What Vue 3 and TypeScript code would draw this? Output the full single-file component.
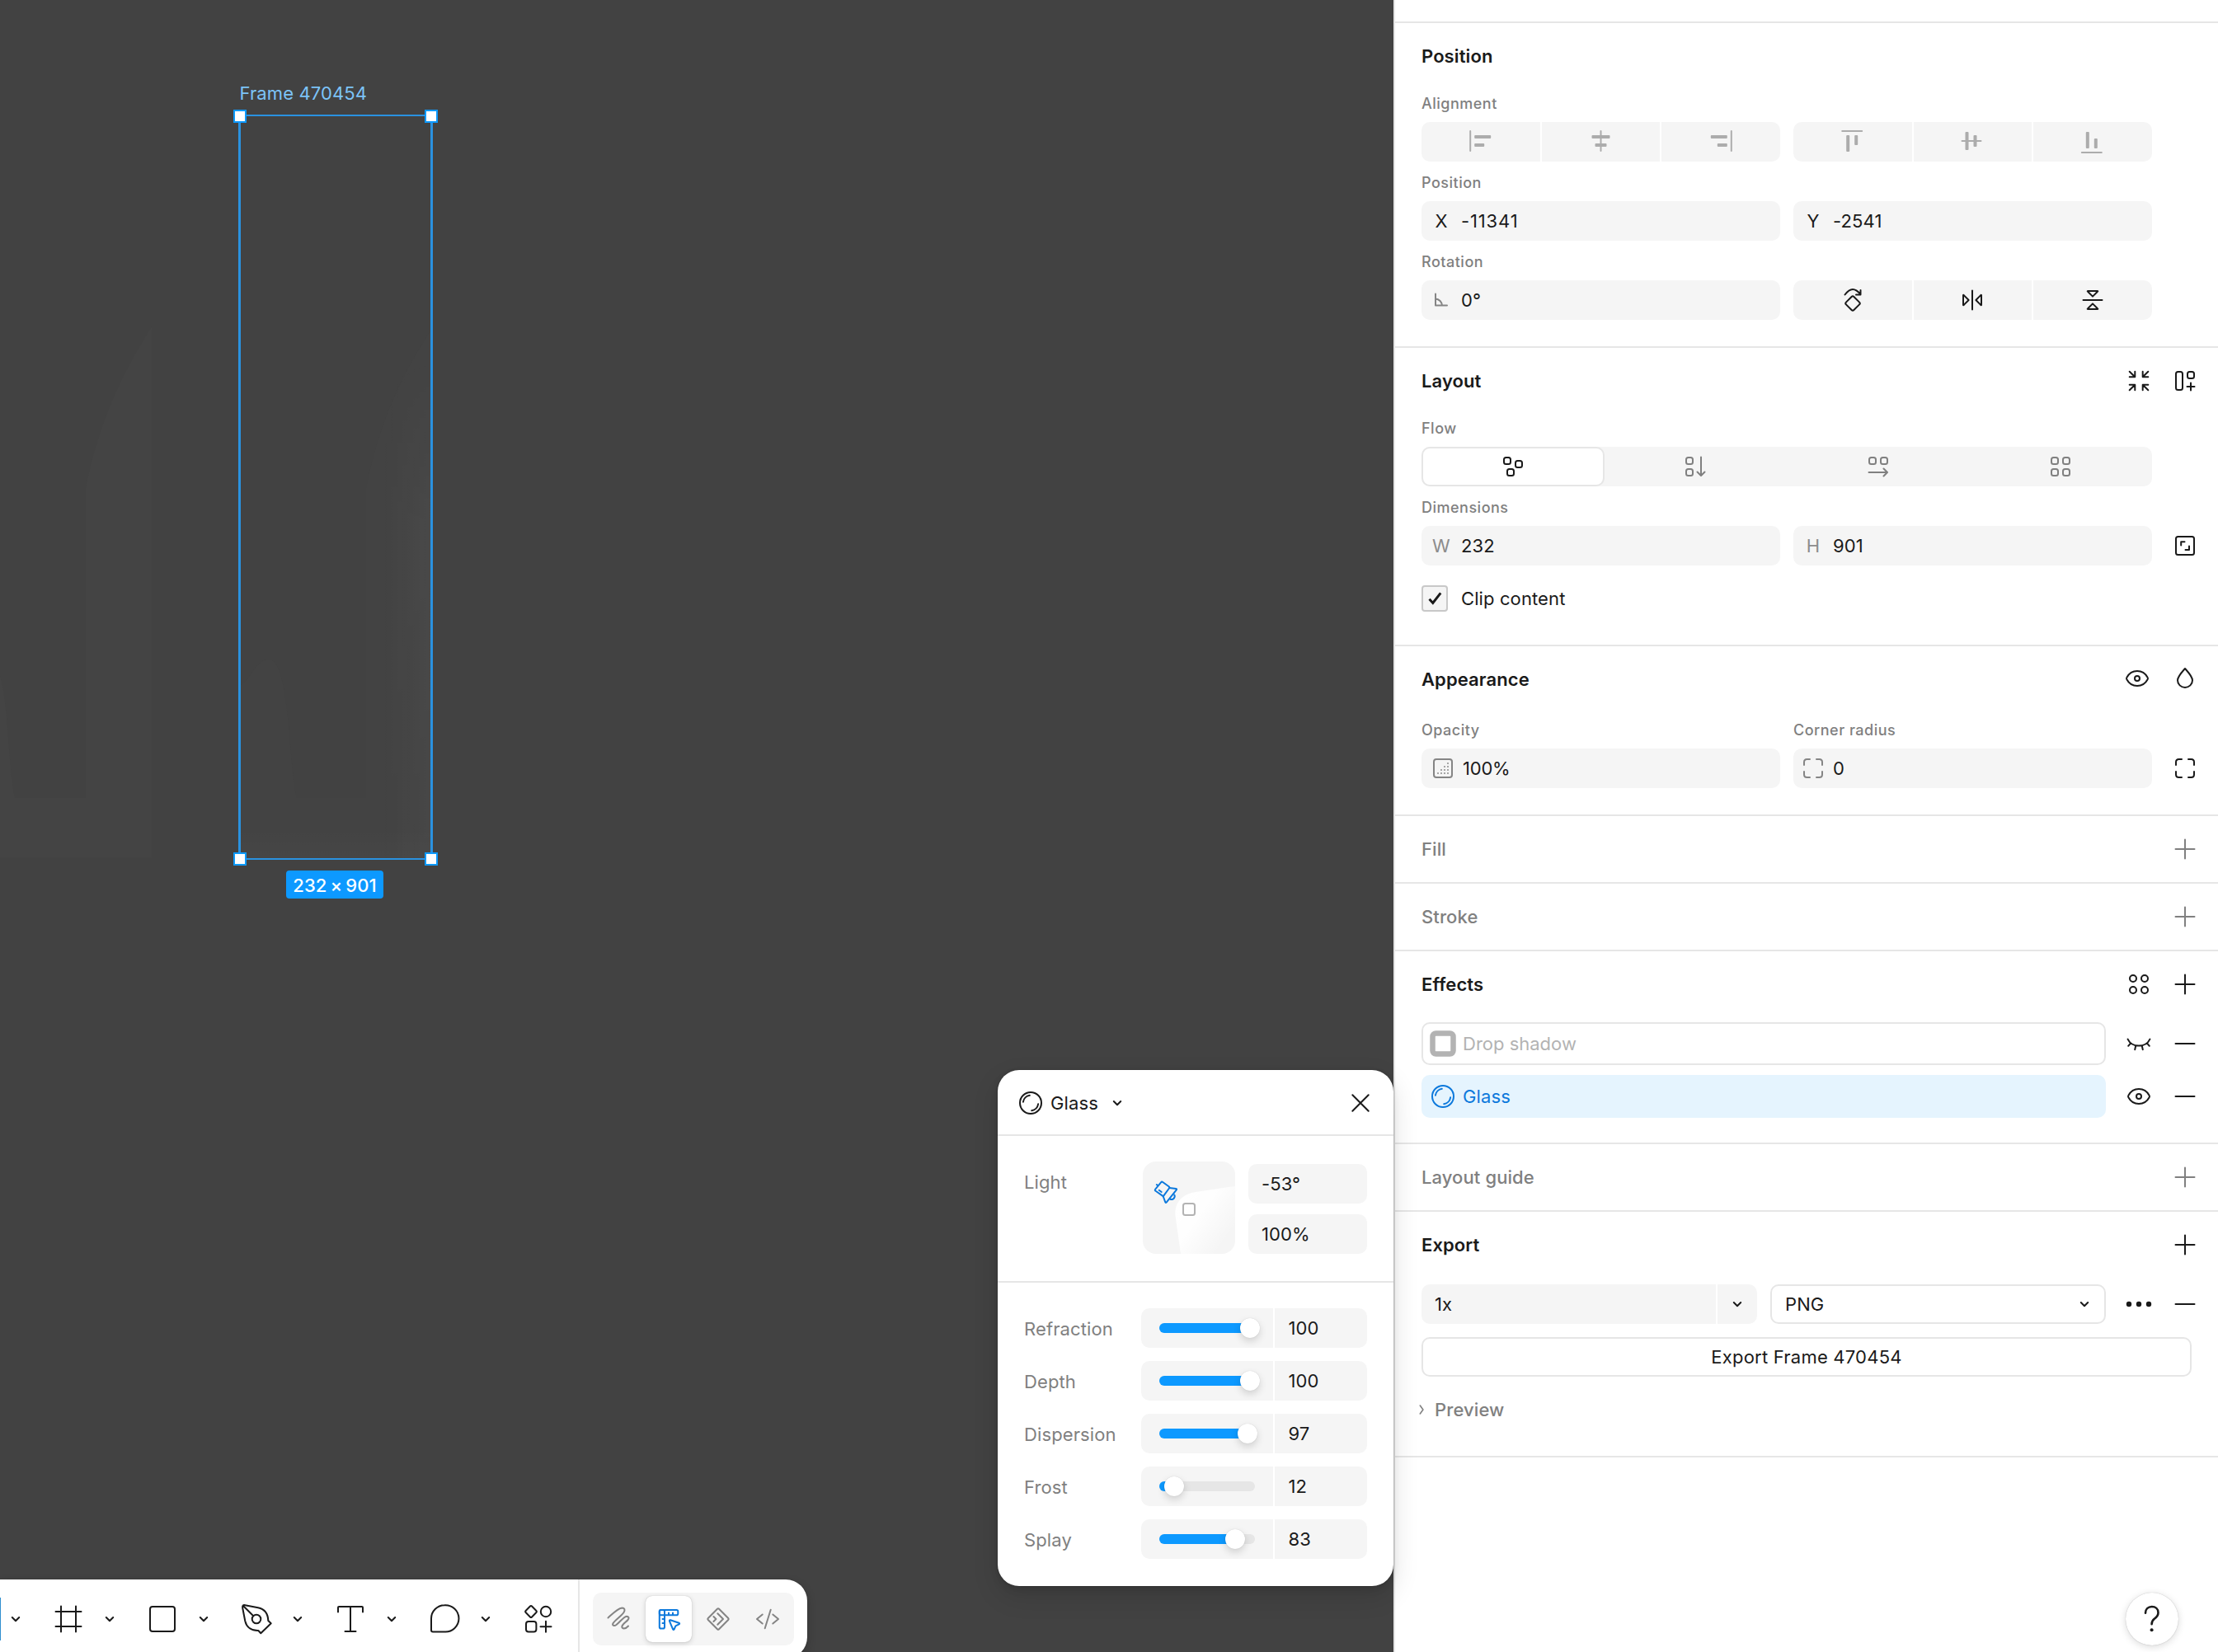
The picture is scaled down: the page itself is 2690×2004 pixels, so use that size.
<script setup lang="ts">
import { h, type FunctionalComponent } from 'vue'

const square = (x: number, y: number) => `<rect x="${x}" y="${y}" width="8" height="8" rx="2.5"/>`
const bar = (x: number, y: number, w: number, ht: number) =>
  `<rect x="${x}" y="${y}" width="${w}" height="${ht}" rx="1" fill="currentColor" stroke="none"/>`
const dot = (x: number, y: number) => `<rect x="${x - 1}" y="${y - 1}" width="2" height="2" fill="currentColor" stroke="none"/>`

// Every glyph is drawn on a 48 x 48 grid with a 2px stroke.
const glyphs: Record<string, string> = {
  plus: '<path d="M24 12.5v23M12.5 24h23"/>',
  minus: '<path d="M12.5 24h23"/>',
  close: '<path d="M14.3 14.3l19.4 19.4M33.7 14.3L14.3 33.7"/>',
  chevron: '<path d="M19.8 22l4.2 4.2 4.2-4.2"/>',
  chevronRight: '<path d="M22.3 19l3.6 5-3.6 5" stroke-width="1.6"/>',
  more: '<g fill="currentColor" stroke="none"><circle cx="12" cy="24" r="3.2"/><circle cx="24" cy="24" r="3.2"/><circle cx="36" cy="24" r="3.2"/></g>',
  eye: '<path d="M11.4 25.2q-.8-1.2 0-2.4C14 18 18.5 15 24 15s10 3 12.6 7.8q.8 1.2 0 2.4C34 30 29.5 33 24 33s-10-3-12.6-7.8z"/><circle cx="24" cy="24" r="3"/>',
  eyeClosed: '<path d="M10.6 18.6C13 23.600 18 26.600 24 26.600s11-3 13.400-8M14.200 23.400l-3 3.400M20.300 26.400l-1.100 4.800M27.700 26.400l1.100 4.800M33.800 23.400l3 3.400"/>',
  drop: '<path d="M24 11c4 4.500 9 9.600 9 14.300a9 8.600 0 0 1-18 0C15 20.600 20 15.500 24 11z"/>',
  shrink: '<path d="M12.700 12.700l6.600 6.600M19.300 12.700v6.600h-6.600M35.300 12.700l-6.600 6.600M28.700 12.700v6.600h6.600M12.700 35.300l6.600-6.600M19.300 35.300v-6.600h-6.600M35.300 35.300l-6.600-6.600M28.700 35.300v-6.600h6.600"/>',
  autoLayout: '<rect x="13" y="13" width="8" height="22" rx="2.500"/><rect x="27" y="13" width="8" height="8" rx="2.500"/><path d="M31 26.500v9M26.500 31h9"/>',
  aspect: '<rect x="13" y="13" width="22" height="22" rx="2.500"/><path d="M19.200 23.500v-4.300h4.300M24.500 29h4.500v-4.500"/>',
  flowFree: square(13, 13) + square(27, 17) + square(17, 27),
  flowDown: square(13, 13) + square(13, 27) + '<path d="M31 12.500v22M26.500 30.500l4.500 4.500 4.500-4.500"/>',
  flowRight: square(13, 13) + square(27, 13) + '<path d="M12.500 31h22M30.500 26.500L35 31l-4.500 4.500"/>',
  flowGrid: square(13, 13) + square(27, 13) + square(13, 27) + square(27, 27),
  alignLeft: bar(10.2, 10, 2, 26) + bar(16.2, 16, 20, 4) + bar(16.2, 26, 12, 4),
  alignCenter: bar(23.5, 10, 2, 26) + bar(13.5, 16, 22, 4) + bar(17.5, 26, 14, 4),
  alignRight: bar(35.8, 10, 2, 26) + bar(11.8, 16, 20, 4) + bar(19.8, 26, 12, 4),
  alignTop: bar(10.2, 10, 26, 2) + bar(16.2, 16, 4, 20) + bar(26.2, 16, 4, 12),
  alignMiddle: bar(10.5, 22, 25, 2) + bar(15.5, 12, 4, 22) + bar(25.5, 16, 4, 14),
  alignBottom: bar(9.8, 36, 26, 2) + bar(15.8, 12, 4, 20) + bar(25.8, 20, 4, 12),
  rotate: '<rect x="17.300" y="21.300" width="13.400" height="13.400" rx="2" transform="rotate(45 24 28)"/><path d="M14.500 17.500C17.500 13.500 20.500 11 24 11s6.500 2.500 9.500 6M33.500 12v5.400H28"/>',
  flipH: '<path d="M24 12.500v23"/><path d="M13 18.300v11.400q0 1.300 1-.1l5.600-5.600-5.600-5.600q-1-1.400-1-.1zM35 18.300v11.400q0 1.300-1-.1L28.400 24l5.600-5.600q1-1.400 1-.1z"/>',
  flipV: '<path d="M12.500 24h23"/><path d="M18.300 13h11.400q1.300 0-.1 1L24 19.600 18.400 14q-1.400-1-.1-1zM18.300 35h11.400q1.300 0-.1-1L24 28.400 18.400 34q-1.400 1-.1 1z"/>',
  angle: '<path d="M17 16.500V30.500h14M17 22.500a8.500 8.500 0 0 1 8 8"/>',
  opacity: '<rect x="13" y="13" width="22" height="22" rx="3"/><g opacity=".7">' +
    [[30, 18], [26, 22], [30, 22], [22, 26], [26, 26], [30, 26], [18, 30], [22, 30], [26, 30], [30, 30]].map(([x, y]) => dot(x, y)).join('') + '</g>',
  corners: '<path d="M13 20v-3.500q0-3.500 3.500-3.500H20M28 13h3.500q3.500 0 3.500 3.500V20M35 28v3.500q0 3.500-3.500 3.500H28M20 35h-3.500q-3.500 0-3.500-3.500V28"/>',
  styles: '<circle cx="17" cy="17" r="4"/><circle cx="31" cy="17" r="4"/><circle cx="17" cy="31" r="4"/><circle cx="31" cy="31" r="4"/>',
  shadow: '<rect x="11.500" y="11.500" width="25" height="25" rx="4" stroke-width="6.500"/>',
  glass: '<circle cx="24" cy="24" r="13"/><path d="M14.900 22.700a9.300 9.300 0 0 1 7.900-7.900M33.100 25.300a9.300 9.300 0 0 1-7.900 7.900"/>',
  frame: '<path d="M15 8.500v31M33 8.500v31M8.500 15h31M8.500 33h31"/>',
  rect: '<rect x="9" y="9" width="30" height="30" rx="3"/>',
  pen: '<path d="M10.300 7.200L26 10.200C34 11.800 38 17 38.300 26l3.400 3.200L29.300 41.200 26.300 38C18 38.300 12 34 10.300 26.500L7.200 10.500Q6.500 6.500 10.300 7.200z"/><circle cx="24" cy="24" r="5.300"/><path d="M8.500 8.500L20 20"/>',
  text: '<path d="M9 15.500V10q0-1 1-1h28q1 0 1 1v5.500M24 9v30M17.500 39h13"/>',
  comment: '<path d="M24 7.200a16.200 16.200 0 1 1 0 32.300H10a2 2 0 0 1-2-2V23.300A16.200 16.200 0 0 1 24 7.200z"/>',
  components: '<rect x="9.700" y="9.700" width="10.600" height="10.600" rx="1.500" transform="rotate(45 15 15)"/><circle cx="33" cy="15" r="6.200"/><rect x="9" y="27" width="12.400" height="12.400" rx="3"/><path d="M33 26.700v13M26.500 33.200h13"/>',
  draw: '<path d="M10.500 22.500C16 17.500 22 11.200 27.500 10.500c3 0 4 2.500 2 5.500-3 4.500-11.500 10-13.200 13.500-.8 2.500 1.700 3.500 4.200 1.500 4.500-3.500 8.500-9.500 12.500-10.300 2.500 0 3.300 2.300 1.500 4.300-2.500 3-6.500 5-7.200 8-.3 3 4.200 3.500 7.700-.5"/>',
  design: '<rect x="12.800" y="13" width="22.500" height="6.200" rx="1.800"/><rect x="12.800" y="13" width="6.200" height="22.500" rx="1.800"/><path d="M24 16.500v2M29 16.500v2M16.500 24h2M16.500 29h2M25 26.600q-.5-1.700 1.100-1.300l10.300 3.400q1.500.8.100 1.600l-4.100 2-1.800 4.200q-.8 1.300-1.500-.1z"/>',
  inspect: '<rect x="14.600" y="14.600" width="18.800" height="18.800" rx="1.500" transform="rotate(45 24 24)"/><path d="M18.400 21l3 3-3 3M23.300 17.300L30 24l-6.700 6.700"/>',
  code: '<path d="M17.700 18.500L11 24l6.700 5.500M27.700 12.700l-7 22.600M30.300 18.500L37 24l-6.700 5.500"/>',
  help: '<path d="M16 16.800c0-4.600 3.200-7.800 7.700-7.800s7.800 2.900 7.800 7.200c0 3.700-2 5.500-4.400 7.300-2.300 1.700-3.500 3.100-3.500 6.700" stroke-width="2.600"/><circle cx="23.600" cy="37.300" r="2" fill="currentColor" stroke="none"/>',
}

const Icon: FunctionalComponent<{ name: string }> = (props) =>
  h('svg', {
    width: 48,
    height: 48,
    viewBox: '0 0 48 48',
    fill: 'none',
    stroke: 'currentColor',
    'stroke-width': 2,
    'stroke-linecap': 'round',
    'stroke-linejoin': 'round',
    style: 'flex:none;display:block',
    innerHTML: glyphs[props.name],
  })
Icon.props = ['name']

const tools = ['frame', 'rect', 'pen', 'text', 'comment']
const modes = ['draw', 'design', 'inspect', 'code']
const flows = ['flowFree', 'flowDown', 'flowRight', 'flowGrid']

const sliders = [
  { label: 'Refraction', value: 100, knob: 110 },
  { label: 'Depth', value: 100, knob: 110 },
  { label: 'Dispersion', value: 97, knob: 107 },
  { label: 'Frost', value: 12, knob: 18 },
  { label: 'Splay', value: 83, knob: 92 },
]
</script>

<template>
  <div class="app">
    <main class="canvas">
      <svg class="artwork" width="600" height="1100" viewBox="0 0 600 1100">
        <defs>
          <linearGradient id="edge" x1="0" x2="1" y1="0" y2="0">
            <stop offset="0" stop-color="#fff" stop-opacity="0" />
            <stop offset="1" stop-color="#fff" stop-opacity=".035" />
          </linearGradient>
          <linearGradient id="floor" x1="0" x2="0" y1="0" y2="1">
            <stop offset="0" stop-color="#fff" stop-opacity="0" />
            <stop offset="1" stop-color="#fff" stop-opacity=".018" />
          </linearGradient>
          <linearGradient id="fade" x1="0" x2="0" y1="0" y2="1">
            <stop offset="0" stop-color="#000" />
            <stop offset=".35" stop-color="#fff" />
            <stop offset=".6" stop-color="#ddd" />
            <stop offset="1" stop-color="#aaa" />
          </linearGradient>
          <mask id="fadeTop"><rect x="440" y="430" width="90" height="612" fill="url(#fade)" /></mask>
        </defs>
        <path d="M184 396C150 450 120 510 104 592V968H18C10 930 10 850 0 820V1040H184z" fill="#444" />
        <path d="M523 400C490 450 460 510 444 592V968H360C350 930 352 800 326 800C310 800 304 825 291 832V1042H523z" fill="#434343" />
        <rect x="464" y="430" width="60" height="612" fill="url(#edge)" mask="url(#fadeTop)" />
        <rect x="291" y="1004" width="232" height="38" fill="url(#floor)" />
      </svg>
      <div class="frame-label">Frame 470454</div>
      <div class="selection">
        <i class="handle tl" /><i class="handle tr" /><i class="handle bl" /><i class="handle br" />
      </div>
      <div class="size-badge">232 × 901</div>

      <nav class="toolbar">
        <span class="move-tool" />
        <span class="caret"><Icon name="chevron" /></span>
        <template v-for="t in tools" :key="t">
          <span class="tool"><Icon :name="t" /></span>
          <span class="caret"><Icon name="chevron" /></span>
        </template>
        <span class="tool"><Icon name="components" /></span>
        <span class="rule" />
        <div class="modes">
          <span v-for="m in modes" :key="m" :class="['mode', { on: m === 'design' }]"><Icon :name="m" /></span>
        </div>
      </nav>

      <section class="popover">
        <header class="pop-head">
          <Icon name="glass" />
          <span class="pop-title">Glass</span>
          <Icon name="chevron" class="pop-caret" />
          <Icon name="close" class="pop-close" />
        </header>
        <div class="light">
          <span class="name">Light</span>
          <svg class="dial" width="112" height="112" viewBox="0 0 112 112" fill="none" stroke-linejoin="round" stroke-linecap="round">
            <defs>
              <linearGradient id="beam" gradientUnits="userSpaceOnUse" x1="45" y1="48" x2="104" y2="90">
                <stop offset="0" stop-color="#fff" />
                <stop offset=".4" stop-color="#fff" stop-opacity=".9" />
                <stop offset="1" stop-color="#fff" stop-opacity="0" />
              </linearGradient>
            </defs>
            <path d="M46 112L39.500 66C38 48 50 39 64 37L104 31L112 30V112z" fill="url(#beam)" />
            <rect x="49" y="51" width="14" height="14" rx="2.500" stroke="#b3b3b3" stroke-width="2" />
            <g stroke="#0d79dc" stroke-width="2">
              <path d="M22 25.300q1-1.200 2.200-.3l7.300 5.300q1.300 1 .4 2.200l-6.300 8.700q-1 1-2 .2l-8-5.600q-1.400-1-.4-2.200z" />
              <path d="M32.300 32l8 .9q1.300.3.500 1.400L28.600 49.600q-.8.800-1.300-.2L24.800 42.500" />
              <path d="M38.300 40.500c1.500 3-1.500 6.500-5 5.200M19.700 34.800l3 2.200M16.800 28l1.200.9" />
            </g>
          </svg>
          <div class="light-values">
            <span class="input">-53°</span>
            <span class="input">100%</span>
          </div>
        </div>
        <div class="sliders">
          <div v-for="s in sliders" :key="s.label" class="slider-row">
            <span class="name">{{ s.label }}</span>
            <span class="slider">
              <span class="track">
                <span class="filled" :style="{ width: s.knob + 'px' }" />
                <span class="knob" :style="{ left: s.knob - 12 + 'px' }" />
              </span>
            </span>
            <span class="slider-value">{{ s.value }}</span>
          </div>
        </div>
      </section>
    </main>

    <aside class="panel">
      <div class="above" />
      <section>
        <header class="title">Position</header>
        <div class="label">Alignment</div>
        <div class="pair">
          <div class="segments faint">
            <span><Icon name="alignLeft" /></span><span><Icon name="alignCenter" /></span><span><Icon name="alignRight" /></span>
          </div>
          <div class="segments faint">
            <span><Icon name="alignTop" /></span><span><Icon name="alignMiddle" /></span><span><Icon name="alignBottom" /></span>
          </div>
        </div>
        <div class="label">Position</div>
        <div class="pair">
          <div class="field"><b class="dark">X</b><span class="loose">-11341</span></div>
          <div class="field"><b class="dark">Y</b>-2541</div>
        </div>
        <div class="label">Rotation</div>
        <div class="pair">
          <div class="field"><Icon name="angle" class="grey" />0°</div>
          <div class="segments">
            <span><Icon name="rotate" /></span><span><Icon name="flipH" /></span><span><Icon name="flipV" /></span>
          </div>
        </div>
      </section>

      <section>
        <header class="title">Layout<span class="actions"><Icon name="shrink" /><Icon name="autoLayout" /></span></header>
        <div class="label">Flow</div>
        <div class="flow">
          <span v-for="(f, i) in flows" :key="f" :class="{ on: i === 0 }"><Icon :name="f" /></span>
        </div>
        <div class="label">Dimensions</div>
        <div class="line">
          <div class="pair">
            <div class="field"><b>W</b>232</div>
            <div class="field"><b>H</b>901</div>
          </div>
          <Icon name="aspect" />
        </div>
        <div class="clip">
          <svg class="check" width="32" height="32" viewBox="0 0 32 32" fill="none">
            <rect x="1" y="1" width="30" height="30" rx="3" fill="#f5f5f5" stroke="#c8c8c8" stroke-width="2" />
            <path d="M9.500 16.800l4.300 4.600 9.400-12" stroke="#1a1a1a" stroke-width="3" />
          </svg>
          Clip content
        </div>
      </section>

      <section>
        <header class="title tall">Appearance<span class="actions"><Icon name="eye" class="nudge" /><Icon name="drop" /></span></header>
        <div class="pair">
          <div class="label">Opacity</div>
          <div class="label">Corner radius</div>
        </div>
        <div class="line">
          <div class="pair">
            <div class="field wide"><Icon name="opacity" class="grey" /><span class="tight">100%</span></div>
            <div class="field"><Icon name="corners" class="grey" />0</div>
          </div>
          <Icon name="corners" />
        </div>
      </section>

      <section class="empty">
        <header class="title">Fill<span class="actions"><Icon name="plus" /></span></header>
      </section>
      <section class="empty">
        <header class="title">Stroke<span class="actions"><Icon name="plus" /></span></header>
      </section>

      <section class="effects">
        <header class="title">Effects<span class="actions"><Icon name="styles" /><Icon name="plus" /></span></header>
        <div class="line effect">
          <div class="chip off"><Icon name="shadow" />Drop shadow</div>
          <Icon name="eyeClosed" /><Icon name="minus" />
        </div>
        <div class="line effect">
          <div class="chip on"><Icon name="glass" />Glass</div>
          <Icon name="eye" /><Icon name="minus" />
        </div>
      </section>

      <section class="empty">
        <header class="title">Layout guide<span class="actions"><Icon name="plus" /></span></header>
      </section>

      <section class="export">
        <header class="title">Export<span class="actions"><Icon name="plus" /></span></header>
        <div class="line export-line">
          <div class="scale"><span class="scale-value">1x</span><span class="scale-caret"><Icon name="chevron" /></span></div>
          <div class="select"><span>PNG</span><Icon name="chevron" /></div>
          <Icon name="more" class="more" /><Icon name="minus" />
        </div>
        <div class="export-button">Export Frame 470454</div>
        <div class="preview"><Icon name="chevronRight" />Preview</div>
      </section>

      <div class="help"><Icon name="help" /></div>
    </aside>
  </div>
</template>

<style>
html,
body {
  margin: 0;
  overflow: hidden;
}
</style>

<style scoped>
.app {
  width: 2690px;
  height: 2004px;
  display: flex;
  overflow: hidden;
  box-sizing: border-box;
  font: 400 22px/32px Inter, 'Liberation Sans', sans-serif;
  letter-spacing: 0.11px;
  color: #1a1a1a;
}
.app * {
  box-sizing: border-box;
}
.canvas {
  position: relative;
  width: 1690px;
  background: #424242;
  z-index: 1;
}

/* selection on the canvas */
.artwork {
  position: absolute;
  left: 0;
  top: 0;
}
.frame-label {
  position: absolute;
  left: 290.5px;
  top: 97px;
  color: #7cc4f8;
}
.selection {
  position: absolute;
  left: 289px;
  top: 139px;
  width: 236px;
  height: 904px;
  border: 2px solid #2a92e0;
  border-left-width: 3px;
  border-right-width: 3px;
}
.handle {
  position: absolute;
  width: 16px;
  height: 16px;
  background: #fff;
  border: 2px solid #0d99ff;
}
.tl { left: -9px; top: -8px; }
.tr { right: -9px; top: -8px; }
.bl { left: -9px; bottom: -9px; }
.br { right: -9px; bottom: -9px; }
.size-badge {
  position: absolute;
  left: 347px;
  top: 1056px;
  width: 118px;
  height: 34px;
  border-radius: 4px;
  background: #0d99ff;
  color: #fff;
  font-weight: 500;
  line-height: 36px;
  word-spacing: -2px;
  text-align: center;
  white-space: nowrap;
}

/* bottom toolbar */
.toolbar {
  position: absolute;
  left: 0;
  top: 1916px;
  width: 979px;
  height: 96px;
  display: flex;
  align-items: center;
  background: #fff;
  border-radius: 0 26px 26px 0;
  box-shadow: 0 0 1px rgba(0, 0, 0, 0.4), 0 4px 12px rgba(0, 0, 0, 0.2);
}
.move-tool {
  width: 1px;
  height: 52px;
  background: #2f8fcf;
  margin-right: 6px;
}
.caret {
  width: 24px;
  margin-right: 14px;
  display: flex;
  justify-content: center;
}
.tool {
  width: 76px;
  display: flex;
  justify-content: center;
}
.rule {
  width: 2px;
  height: 96px;
  background: #e6e6e6;
  margin: 0 16px 0 10px;
}
.modes {
  display: flex;
  gap: 4px;
  padding: 4px;
  height: 64px;
  border-radius: 10px;
  background: #f5f5f5;
  color: #848484;
}
.mode {
  width: 56px;
  height: 56px;
  display: flex;
  align-items: center;
  justify-content: center;
}
.mode.on {
  background: #fff;
  border-radius: 8px;
  color: #0d79dc;
  box-shadow: 0 0 1px rgba(0, 0, 0, 0.3), 0 2px 6px rgba(0, 0, 0, 0.15);
}

/* glass settings popover */
.popover {
  position: absolute;
  left: 1210px;
  top: 1298px;
  width: 480px;
  height: 626px;
  border-radius: 26px;
  background: #fff;
  box-shadow: 0 0 2px rgba(0, 0, 0, 0.3), 0 4px 10px rgba(0, 0, 0, 0.1), 0 12px 32px rgba(0, 0, 0, 0.12);
}
.pop-head {
  display: flex;
  align-items: center;
  height: 80px;
  padding: 0 16px;
  border-bottom: 2px solid #e6e6e6;
}
.pop-head > * {
  margin-top: 1px;
}
.pop-caret {
  margin-left: -1px;
}
.pop-title {
  width: 58px;
  white-space: nowrap;
}
.pop-close {
  margin-left: auto;
}
.name {
  color: #808080;
}
.light {
  display: flex;
  height: 178px;
  padding: 31px 32px 0;
  border-bottom: 2px solid #e6e6e6;
}
.light .name {
  width: 144px;
  padding-top: 9px;
}
.dial {
  background: #f5f5f5;
  border-radius: 16px;
}
.light-values {
  margin-left: 16px;
  padding-top: 3px;
  display: flex;
  flex-direction: column;
  gap: 13px;
}
.input {
  width: 144px;
  height: 48px;
  border-radius: 10px;
  background: #f5f5f5;
  padding-left: 16px;
  line-height: 48px;
}
.sliders {
  padding: 31px 32px 0;
  display: flex;
  flex-direction: column;
  gap: 16px;
}
.slider-row {
  display: flex;
  height: 48px;
  line-height: 48px;
}
.slider-row .name {
  width: 142px;
  padding-top: 1px;
}
.slider {
  width: 160px;
  background: #f5f5f5;
  border-radius: 10px 0 0 10px;
  padding: 18px 22px;
  margin-right: 2px;
}
.track {
  position: relative;
  display: block;
  width: 116px;
  height: 12px;
  border-radius: 6px;
  background: #e6e6e6;
}
.filled {
  display: block;
  height: 12px;
  border-radius: 6px;
  background: #0d99ff;
}
.knob {
  position: absolute;
  top: -6px;
  width: 24px;
  height: 24px;
  border-radius: 50%;
  background: #fff;
  box-shadow: 0 0 1px rgba(0, 0, 0, 0.2), 0 4px 10px rgba(0, 0, 0, 0.15);
}
.slider-value {
  width: 112px;
  padding-left: 16.5px;
  background: #f5f5f5;
  border-radius: 0 10px 10px 0;
}

/* properties panel */
.panel {
  position: relative;
  width: 1000px;
  background: #fff;
  border-left: 2px solid #e6e6e6;
}
.above {
  height: 28px;
  border-bottom: 2px solid #e6e6e6;
}
.panel > section {
  padding: 0 16px 32px 32px;
  border-bottom: 2px solid #e6e6e6;
}
.title {
  display: flex;
  align-items: center;
  height: 72px;
  padding-top: 8px;
  font-weight: 600;
  letter-spacing: 0.1px;
}
.title.tall {
  height: 76px;
  padding-top: 4px;
}
.actions {
  display: flex;
  gap: 8px;
  margin-left: auto;
}
.nudge {
  transform: translate(-2px, -1px);
}
.panel > section.empty {
  padding-bottom: 0;
  height: 82px;
}
.empty .title {
  color: #808080;
  font-weight: 550;
  height: 80px;
  padding-top: 0;
}
.label {
  height: 48px;
  padding-top: 4px;
  line-height: 44px;
  font-size: 18px;
  font-weight: 500;
  letter-spacing: 0.5px;
  color: #808080;
}
.pair {
  display: grid;
  grid-template-columns: 435px 435px;
  gap: 16px;
}
.line {
  display: flex;
  align-items: center;
  justify-content: space-between;
}
.field {
  display: flex;
  align-items: center;
  height: 48px;
  border-radius: 10px;
  background: #f5f5f5;
}
.field.wide {
  padding-left: 2px;
}
.field b {
  width: 48px;
  text-align: center;
  font-weight: 400;
  color: #8c8c8c;
}
.field b.dark {
  color: #1a1a1a;
}
.loose {
  letter-spacing: 0.85px;
}
.tight {
  letter-spacing: -0.2px;
}
.grey {
  color: #858585;
}
.segments {
  display: grid;
  grid-template-columns: repeat(3, 1fr);
  gap: 2px;
  height: 48px;
  border-radius: 10px;
  overflow: hidden;
}
.segments span {
  display: flex;
  justify-content: center;
  background: #f5f5f5;
}
.faint {
  color: #acacac;
}
.flow {
  display: grid;
  grid-template-columns: repeat(4, 1fr);
  width: 886px;
  height: 48px;
  border-radius: 10px;
  background: #f5f5f5;
  color: #808080;
}
.flow span {
  display: flex;
  align-items: center;
  justify-content: center;
  height: 48px;
}
.flow .on {
  background: #fff;
  border: 2px solid #e6e6e6;
  border-radius: 10px;
  color: #1a1a1a;
}
.clip {
  display: flex;
  align-items: center;
  gap: 16px;
  height: 48px;
  margin: 16px 0 0;
}
.panel > section.effects {
  padding-bottom: 30px;
}
.effects .title {
  height: 80px;
  padding-top: 0;
  margin-bottom: 6px;
}
.effect {
  gap: 8px;
  height: 52px;
}
.effect + .effect {
  margin-top: 12px;
}
.chip {
  display: flex;
  align-items: center;
  width: 830px;
  height: 52px;
  margin-right: 8px;
  padding-left: 2px;
  border-radius: 10px;
}
.chip.off {
  border: 2px solid #e6e6e6;
  padding-left: 0;
  color: #b3b3b3;
  letter-spacing: 0;
}
.chip.on {
  background: #e5f4fe;
  color: #0d79dc;
}
.panel > section.export {
  padding-bottom: 32px;
}
.export .title {
  height: 80px;
  padding-top: 0;
  margin-bottom: 8px;
}
.export-line {
  gap: 8px;
}
.scale {
  display: flex;
  gap: 2px;
  width: 407px;
  height: 48px;
  line-height: 48px;
  border-radius: 10px;
  overflow: hidden;
}
.scale-value {
  flex: 1;
  padding-left: 16px;
  background: #f5f5f5;
}
.scale-caret {
  width: 48px;
  background: #f5f5f5;
}
.select {
  display: flex;
  align-items: center;
  justify-content: space-between;
  width: 407px;
  height: 48px;
  margin-left: 8px;
  padding-left: 16px;
  line-height: 46px;
  border: 2px solid #e6e6e6;
  border-radius: 10px;
}
.more {
  margin-left: 8px;
}
.export-button {
  width: 934px;
  height: 48px;
  margin-top: 16px;
  border: 2px solid #e6e6e6;
  border-radius: 10px;
  line-height: 45px;
  letter-spacing: 0.22px;
  text-align: center;
}
.preview {
  display: flex;
  align-items: center;
  height: 48px;
  margin: 16px 0 0 -24px;
  color: #808080;
  font-weight: 550;
}
.preview svg {
  margin-right: -8px;
}
.help {
  position: absolute;
  right: 48px;
  top: 1932px;
  width: 64px;
  height: 64px;
  border-radius: 50%;
  background: #fff;
  display: flex;
  align-items: center;
  justify-content: center;
  box-shadow: 0 0 1px rgba(0, 0, 0, 0.3), 0 2px 10px rgba(0, 0, 0, 0.15);
}
</style>
